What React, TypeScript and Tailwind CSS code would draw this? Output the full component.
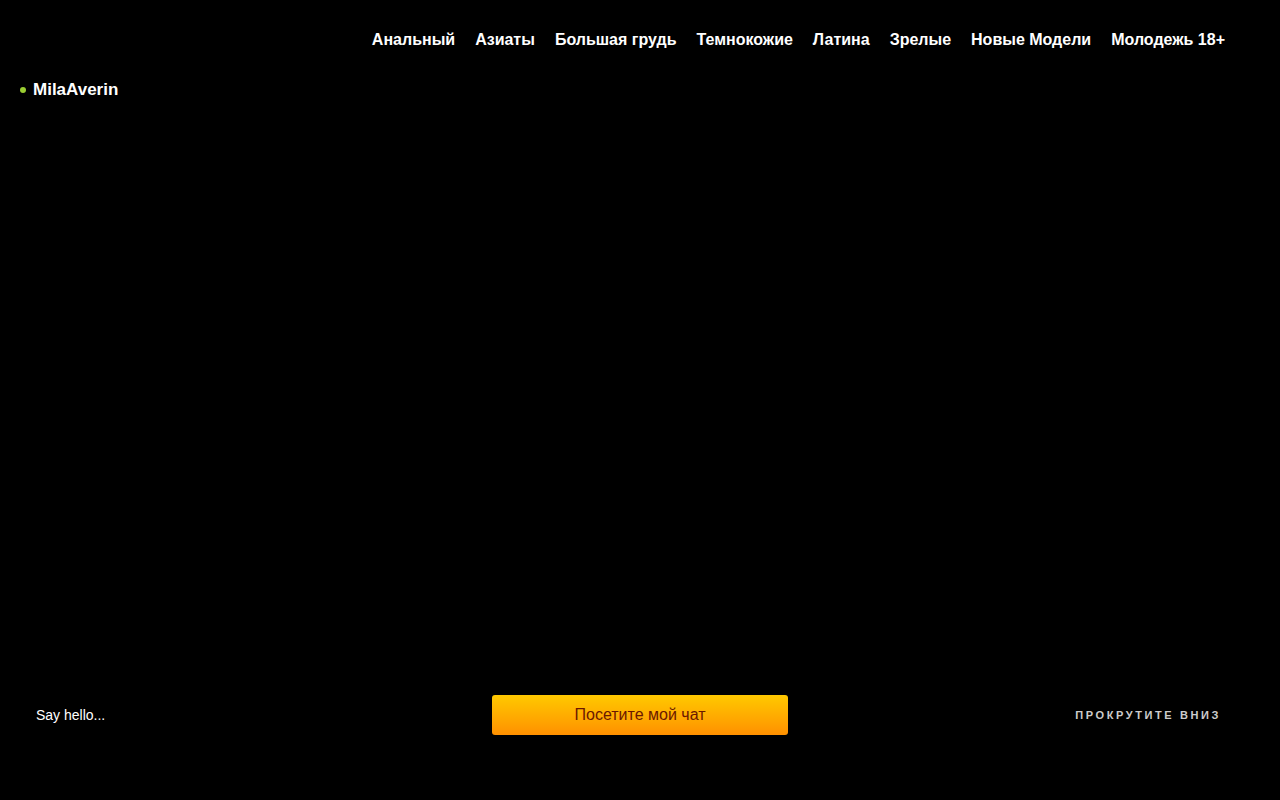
const links = [
  "Анальный",
  "Азиаты",
  "Большая грудь",
  "Темнокожие",
  "Латина",
  "Зрелые",
  "Новые Модели",
  "Молодежь 18+",
]

export default function App() {
  return (
    <div className="flex h-[800px] w-full flex-col bg-black pt-px font-['Liberation_Sans',Arial,sans-serif] text-white">
      <nav className="flex h-[78px] items-center justify-end gap-5 pr-[55px]">
        {links.map((l) => (
          <a key={l} href="#" className="text-[16px] font-bold leading-none text-white">
            {l}
          </a>
        ))}
      </nav>

      <div className="flex items-center gap-[7px] pl-5">
        <span className="h-[6px] w-[6px] rounded-full bg-[#9acd32]"></span>
        <span className="text-[17px] font-bold leading-[22px]">MilaAverin</span>
      </div>

      <div className="flex-1"></div>

      <div className="relative mb-[65px] flex h-10 items-center justify-between pl-9 pr-[59px]">
        <span className="text-[14px] text-white">Say hello...</span>
        <button className="absolute left-1/2 top-0 h-10 w-[296px] -translate-x-1/2 rounded-[3px] bg-gradient-to-b from-[#ffc900] to-[#ff9000] text-[16px] text-[#6b1800]">
          Посетите мой чат
        </button>
        <span className="text-[11px] font-bold tracking-[2.6px] text-[#cccccc]">ПРОКРУТИТЕ ВНИЗ</span>
      </div>
    </div>
  )
}
